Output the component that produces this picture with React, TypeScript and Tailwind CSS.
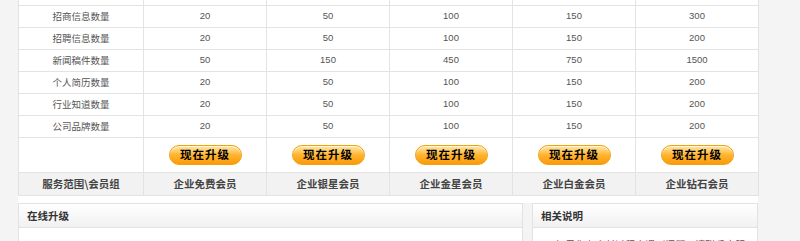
import React from 'react';

const ROWS = [
  { name: '招商信息数量', vals: ['20', '50', '100', '150', '300'] },
  { name: '招聘信息数量', vals: ['20', '50', '100', '150', '200'] },
  { name: '新闻稿件数量', vals: ['50', '150', '450', '750', '1500'] },
  { name: '个人简历数量', vals: ['20', '50', '100', '150', '200'] },
  { name: '行业知道数量', vals: ['20', '50', '100', '150', '200'] },
  { name: '公司品牌数量', vals: ['20', '50', '100', '150', '200'] },
];

const GROUPS = ['企业免费会员', '企业银星会员', '企业金星会员', '企业白金会员', '企业钻石会员'];

const cols = 'grid grid-cols-[125px_repeat(5,123px)]';
const cell = 'border-r border-b border-[#e3e3e3] flex items-center justify-center';

function UpgradeButton() {
  return (
    <button className="w-[73px] h-[20px] rounded-full border border-[#f2a20c] bg-gradient-to-b from-[#ffe8a0] via-[#ffb42c] to-[#fb9a08] text-[11.5px] font-bold text-black leading-none tracking-[1px] shadow-[inset_0_1px_0_rgba(255,255,255,0.7)] [font-family:'Noto_Sans_CJK_SC',sans-serif]">
      现在升级
    </button>
  );
}

export default function App() {
  return (
    <div className="w-[800px] h-[241px] overflow-hidden bg-[#f4f4f4] text-[#444] [font-family:'Noto_Sans_CJK_SC','Liberation_Sans',sans-serif]">
      <div className="ml-[18px] w-[740px] bg-white">
        <div className="border-l border-[#e3e3e3]">
          {/* tail of the row above */}
          <div className={cols}>
            {Array.from({ length: 6 }).map((_, i) => (
              <div key={i} className={`${cell} h-[6px]`} />
            ))}
          </div>

          {ROWS.map((r) => (
            <div key={r.name} className={`${cols} text-[9.5px]`}>
              <div className={`${cell} h-[22px] text-[#555]`}>{r.name}</div>
              {r.vals.map((v, i) => (
                <div key={i} className={`${cell} h-[22px] text-[#555] [font-family:'Liberation_Sans',sans-serif]`}>
                  {v}
                </div>
              ))}
            </div>
          ))}

          <div className={cols}>
            <div className={`${cell} h-[35px]`} />
            {GROUPS.map((g) => (
              <div key={g} className={`${cell} h-[35px]`}>
                <UpgradeButton />
              </div>
            ))}
          </div>

          <div className={`${cols} bg-[#f2f2f2] text-[10.5px] font-bold text-[#444]`}>
            <div className={`${cell} h-[23px]`}>服务范围\会员组</div>
            {GROUPS.map((g) => (
              <div key={g} className={`${cell} h-[23px]`}>
                {g}
              </div>
            ))}
          </div>
        </div>
        <div className="h-[7px] bg-white" />
      </div>

      <div className="ml-[18px] w-[740px] flex gap-[9px]">
        <div className="w-[505px] h-[60px] border border-[#e2e2e2] bg-white">
          <div className="h-[24px] flex items-center px-[8px] bg-gradient-to-b from-white to-[#f1f1f1] border-b border-[#e2e2e2] text-[10.5px] font-bold text-[#333]">
            在线升级
          </div>
          <div className="relative h-[20px] text-[10px]">
            <span className="absolute left-[96px] top-[9px] text-[#f08a00]">¥</span>
            <span className="absolute left-[246px] top-[9px] text-[#f08a00]">¥</span>
          </div>
        </div>
        <div className="w-[226px] h-[60px] border border-[#e2e2e2] bg-white">
          <div className="h-[24px] flex items-center px-[8px] bg-gradient-to-b from-white to-[#f1f1f1] border-b border-[#e2e2e2] text-[10.5px] font-bold text-[#333]">
            相关说明
          </div>
          <div className="px-[14px] pt-[9px] text-[10px] text-[#555] whitespace-nowrap overflow-hidden">
            1.如果您在支付过程中遇到问题，请联系客服。
          </div>
        </div>
      </div>
    </div>
  );
}
